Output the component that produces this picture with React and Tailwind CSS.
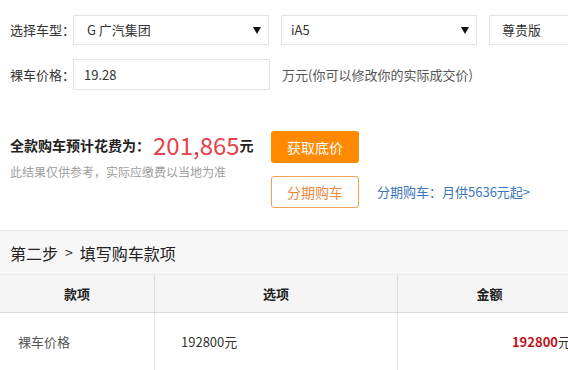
import React from "react";

const font = { fontFamily: '"Noto Sans CJK SC", "Noto Sans", sans-serif' };

function Arrow() {
  return (
    <svg width="8" height="7" viewBox="0 0 8 7" className="shrink-0">
      <polygon points="0,0 8,0 4,7" fill="#111" />
    </svg>
  );
}

function Select({ text, arrow = true, pl = "pl-[13px]" }) {
  return (
    <div className={`flex h-[30px] w-[196px] shrink-0 items-center justify-between border border-[#e3e3e3] bg-white ${pl} pr-[7px] text-[13px] text-[#333] whitespace-nowrap`}>
      <span>{text}</span>
      {arrow && <Arrow />}
    </div>
  );
}

export default function App() {
  return (
    <div className="w-[568px] h-[370px] overflow-hidden bg-white" style={font}>
      <div className="w-[600px]">
        {/* Row 1 */}
        <div className="flex items-center pl-[10px] pt-[15px]">
          <div className="w-[63px] shrink-0 whitespace-nowrap text-[13px] text-[#333]">选择车型：</div>
          <div className="flex gap-[12px]">
            <Select text="G 广汽集团" />
            <Select text="iA5" pl="pl-[9px]" />
            <Select text="尊贵版" arrow={false} pl="pl-[12px]" />
          </div>
        </div>
        {/* Row 2 */}
        <div className="flex items-center pl-[10px] pt-[14px]">
          <div className="w-[63px] shrink-0 whitespace-nowrap text-[13px] text-[#333]">裸车价格：</div>
          <div className="flex h-[31px] w-[197px] shrink-0 items-center border border-[#e3e3e3] pl-[10px] text-[13px] text-[#333]">
            19.28
          </div>
          <div className="whitespace-nowrap pl-[12px] text-[13px] text-[#555]">万元(你可以修改你的实际成交价)</div>
        </div>
        {/* Total block */}
        <div className="flex pl-[10px] pt-[41px]">
          <div className="w-[261px] shrink-0">
            <div className="flex h-[28px] items-center whitespace-nowrap">
              <span className="text-[14px] font-bold text-[#222]">全款购车预计花费为：</span>
              <span className="ml-[3px] text-[24px] leading-none text-[#e8414a]">201,865</span>
              <span className="text-[14px] font-bold text-[#222]">元</span>
            </div>
            <div className="flex h-[26px] items-center whitespace-nowrap text-[12px] text-[#a0a0a0]">
              此结果仅供参考，实际应缴费以当地为准
            </div>
          </div>
          <div className="flex flex-col">
            <div className="flex h-[32px] w-[88px] items-center justify-center rounded-[3px] bg-[#ff8a00] text-[14px] text-white">
              获取底价
            </div>
            <div className="mt-[13px] flex items-center">
              <div className="flex h-[32px] w-[88px] shrink-0 items-center justify-center rounded-[3px] border border-[#f3a159] bg-white text-[14px] text-[#f0883a]">
                分期购车
              </div>
              <div className="whitespace-nowrap pl-[18px] text-[13px] text-[#3a76c0]">分期购车：月供5636元起&gt;</div>
            </div>
          </div>
        </div>
        {/* Section */}
        <div className="mt-[22px] w-[581px]">
          <div className="flex h-[44px] items-center border-t border-[#e6e6e6] bg-[#f7f7f7] pl-[10px] text-[16px] text-[#222] whitespace-nowrap">
            <span>第二步</span>
            <span className="mx-[7px] text-[14px]">&gt;</span>
            <span>填写购车款项</span>
          </div>
          <div className="grid grid-cols-[154px_243px_184px] border-t border-[#ececec] border-b border-b-[#dcdcdc] bg-[#f5f5f5] text-[13px] font-bold text-[#222]">
            <div className="flex h-[37px] items-center justify-center">款项</div>
            <div className="flex h-[37px] items-center justify-center border-l border-[#dedede]">选项</div>
            <div className="flex h-[37px] items-center justify-center border-l border-[#dedede]">金额</div>
          </div>
          <div className="grid grid-cols-[154px_243px_184px] border-b border-[#e6e6e6] text-[13px]">
            <div className="flex h-[57px] items-center pl-[18px] text-[#555]">裸车价格</div>
            <div className="flex h-[57px] items-center border-l border-[#e6e6e6] pl-[26px] text-[#333]">192800元</div>
            <div className="flex h-[57px] items-center justify-end border-l border-[#e6e6e6] pr-[10px]">
              <span className="font-bold text-[#c0121b]">192800</span>
              <span className="text-[#333]">元</span>
            </div>
          </div>
        </div>
      </div>
    </div>
  );
}
